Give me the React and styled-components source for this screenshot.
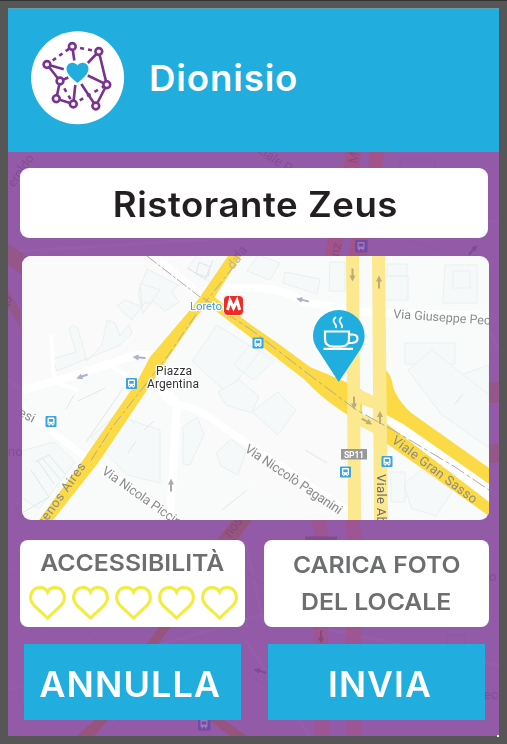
import React from 'react';
import styled, { createGlobalStyle } from 'styled-components';

const BLUE = '#21addd';
const PURPLE = '#935ba7';

const GlobalStyle = createGlobalStyle`
  * { box-sizing: border-box; }
  body { margin: 0; background: #565656; font-family: Inter, 'Open Sans', sans-serif; }
`;

const Frame = styled.div`
  width: 507px;
  height: 744px;
  padding: 8px;
  background: #565656;
  border-top: 1px solid #333;
  padding-top: 7px;
  overflow: hidden;
`;

const Screen = styled.main`
  position: relative;
  width: 491px;
  height: 728px;
  display: flex;
  flex-direction: column;
  background: ${PURPLE};
`;

const Backdrop = styled.svg`
  position: absolute;
  left: 0;
  top: 144px;
  width: 491px;
  height: 584px;
`;

const Header = styled.header`
  height: 144px;
  flex: none;
  display: flex;
  align-items: center;
  gap: 24px;
  padding: 0 0 5px 23px;
  background: ${BLUE};
  border-top: 1px solid #5b9fb9;
`;

const Logo = styled.svg`
  width: 94px;
  height: 94px;
  flex: none;
`;

const Label = styled.span`
  display: inline-block;
  white-space: nowrap;
  font-weight: ${(p) => p.$weight || 600};
  font-size: ${(p) => p.$size}px;
  line-height: ${(p) => p.$line || 40}px;
  letter-spacing: ${(p) => p.$track || 0}px;
  margin-right: ${(p) => -(p.$track || 0)}px;
  color: ${(p) => p.$color || '#fff'};
  transform: scaleX(${(p) => p.$stretch || 1});
  transform-origin: ${(p) => p.$origin || 'center'};
`;

const Content = styled.div`
  position: relative;
  flex: 1;
  padding: 16px 10px 0 12px;
`;

const TitleCard = styled.h1`
  margin: 0;
  width: 468px;
  height: 69.5px;
  padding: 3px 0 0 2px;
  display: flex;
  align-items: center;
  justify-content: center;
  border-radius: 9px;
  background: #fff;
`;

const MapCard = styled.svg`
  display: block;
  margin: 18.5px 0 0 2px;
  width: 467px;
  height: 264px;
  border-radius: 9px;
`;

const Row = styled.div`
  display: flex;
  gap: ${(p) => p.$gap}px;
  margin: ${(p) => p.$margin};
`;

const Card = styled.section`
  width: 225px;
  height: 87px;
  padding-top: ${(p) => p.$top}px;
  display: flex;
  flex-direction: column;
  align-items: center;
  border-radius: 8px;
  background: #fff;
`;

const Hearts = styled.div`
  display: flex;
  gap: 6px;
  margin-top: 7px;
  padding-left: 2px;
`;

const HeartIcon = styled.svg`
  width: 37px;
  height: 36px;
`;

const Action = styled.button`
  width: 217px;
  height: 76px;
  padding: 4px ${(p) => p.$right || 0}px 0 ${(p) => p.$left || 0}px;
  display: flex;
  align-items: center;
  justify-content: center;
  border: 0;
  border-radius: 0;
  font-family: inherit;
  background: ${BLUE};
`;

const MapText = styled.text`
  font-family: Roboto, sans-serif;
  font-size: ${(p) => p.$size || 13}px;
  font-weight: ${(p) => p.$weight || 400};
  fill: ${(p) => p.$fill || '#8b8b8b'};
  stroke: ${(p) => p.$halo || 'none'};
  stroke-width: 2.5px;
  stroke-linejoin: round;
  paint-order: stroke;
`;

const Corner = styled.i`
  position: absolute;
  right: 0;
  bottom: -1px;
  width: 2px;
  height: 2px;
  background: #fff;
`;

function NetworkLogo() {
  const nodes = [[47, 21.5], [73.5, 26.5], [21.7, 39.5], [34.7, 56], [81.5, 59.7], [31, 73.7], [48, 79], [70.5, 81]];
  return (
    <Logo viewBox="0 0 94 94" aria-label="Dionisio">
      <circle cx="46.6" cy="46.8" r="46.5" fill="#fff" />
      <g transform="translate(-5.7 -6)" stroke="#79328f" strokeWidth="2.6" fill="none">
        <path d="M47 21.5 49 35.5M73.5 26.5 62.5 38M73.5 26.5 81.5 59.7 70.5 81 56 59M81.5 59.7 62.5 50.5M21.7 39.5 38.5 44.2M21.7 39.5 34.7 56 43 52.5M34.7 56 31 73.7 48 79 50 60" />
        <path d="M21.7 39.5 47 21.5 73.5 26.5" strokeDasharray="4 4" strokeDashoffset="1" />
        <path d="M34.7 56 48 79 81.5 59.7" strokeDasharray="4 4.5" />
        {nodes.map(([x, y]) => <circle key={`${x}-${y}`} cx={x} cy={y} r="3.4" fill="#fff" />)}
      </g>
      <path d="M46.5 52C42 48 35.5 43.5 35.5 37.5 35.5 31.5 43.5 29.5 46.5 34.5 49.5 29.5 57.5 31.5 57.5 37.5 57.5 43.5 51 48 46.5 52Z" fill={BLUE} />
    </Logo>
  );
}

function Heart() {
  return (
    <HeartIcon viewBox="0 0 37 36">
      <path d="M18.5 33 5 20.3C1.7 17 1.6 14.5 1.6 12.6 1.6 6.6 5.8 2.4 11 2.4 14.7 2.4 17.2 4.2 18.5 7 19.8 4.2 22.3 2.4 26 2.4 31.2 2.4 35.4 6.6 35.4 12.6 35.4 14.5 35.3 17 32 20.3Z" fill="none" stroke="#f2ec3a" strokeWidth="3" />
    </HeartIcon>
  );
}

function BusStop({ x, y }) {
  return (
    <g transform={`translate(${x} ${y})`}>
      <rect x="-5.5" y="-5.5" width="11" height="11" rx="1" fill="#3ba5dc" />
      <path d="M-3.5-2.8Q-3.5-4-2.3-4H2.3Q3.5-4 3.5-2.8V3H2.5V4H1V3H-1V4H-2.5V3H-3.5Z" fill="#fff" />
      <path d="M-2.2-2.5H2.2V.2H-2.2ZM-2.4 1.4h1v1h-1zM1.4 1.4h1v1h-1z" fill="#3ba5dc" />
    </g>
  );
}

function Arrow({ x, y, angle = 0, size = 6.5, color = '#b9ac77' }) {
  return (
    <g transform={`translate(${x} ${y}) rotate(${angle})`} fill={color} stroke="none">
      <path d={`M-1-${size}H1V${size - 6}H3L0 ${size}-3 ${size - 6}H-1Z`} />
    </g>
  );
}

function StreetMap() {
  return (
    <MapCard viewBox="22 256 467 264" preserveAspectRatio="none">
      <rect x="22" y="255" width="467" height="266" fill="#f9fbfb" />
      <path d="M22 256H240L160 350 60 378 22 385ZM210 340 345 400V520H300L200 440Z" fill="#fafafa" />
      <g fill="#f5f9fa" stroke="#eaeff0" strokeWidth="1">
        <path d="M147 269 178 285 172 292 179 302 165 311 153 301 143 313 138 293Z" />
        <path d="M140 283 160 290 150 304 145 302 132 320 117 306 125 300 142 307Z" />
        <path d="M69 329Q72 322 78 329L87 361 102 345 107 320 115 323 120 336 129 325 132 333 120 345 57 371 53 359 76 352Z" />
        <path d="M188 268 203 247 228 257 211 283Z" />
        <path d="M217 325 260 352 227 393 192 361ZM250 345 275 360 253 380 234 365Z" />
        <path d="M247 271 258 255 280 263 270 280ZM285 272 320 279 317 294 283 283Z" />
        <path d="M330 262H345V291H329ZM387 264H407V276H387ZM385 276H408V300H385ZM445 265H477V303H443Z" />
        <path d="M453 271H470V288H453ZM405 343H455V364H405ZM455 377 489 365V420L447 390Z" />
        <path d="M408 370 432 350 489 395V448L441 414Z" />
        <path d="M22 451 54 442 75 462 39 509 22 498ZM91 437 115 415 160 430V483L127 475Z" />
        <path d="M183 427 197 417 204 434 190 465 183 464ZM216 453 231 439 246 451 238 475 221 466Z" />
        <path d="M218 392 239 380 259 396 252 413 226 405ZM252 412 278 392 296 410 278 435Z" />
        <path d="M391 472H405V502H391ZM404 484 421 470 453 490 436 516 411 508Z" />
      </g>
      <path d="M35 462 49 455 66 475M31 470 49 497 22 513M38 461 54 484M43 459 60 479M187 268l18 11 8-19M199 262l11 5-2 10-12-3zM66 409l8-14M128 453l8-12M144 430l10-9M78 401l27-13M86 442l38-55M222 510l25-20M305 450l22 13M455 404l8-10" fill="none" stroke="#e0e6e8" />
      <g fill="none" stroke="#fff">
        <path d="M22 390 73 376 115 362Q138 352 157 356M160 384Q162 397 177 405L170 520" strokeWidth="8" />
        <path d="M22 409 92 462 176 520M160 375 177 405Q195 405 226 429L347 510" strokeWidth="7" />
        <path d="M147 250 204 298M204 291 227 288 261 288Q285 290 304 302L361 312 489 316" strokeWidth="8" />
        <path d="M51 335 54 382 78 390M109 365 127 375" strokeWidth="4" />
      </g>
      <path d="M147 256 200 297" stroke="#aaa" strokeDasharray="12 2 3 2" />
      <g fill="#fcda45">
        <path d="M228 256H241L214 298 197 316 168 358 149 387 98 463 53 520H39L81 463 138 380 150 357 190 310 200 297Z" />
        <path d="M201 297 213 296 250 324 283 347 310 367Q332 376 348 383L362 390V423L348 415Q322 399 305 380L283 363 250 337 208 305Z" />
        <path d="M386 370Q392 376 393 387 397 399 410 412L489 468V484L403 424 385 414ZM386 423 489 502V516L386 443Z" />
      </g>
      <path d="M385 416 403 424 489 484V501L386 423Z" fill="#fff" />
      <g fill="#fce88e">
        <path d="M346 255H359L361 521H348ZM372 255H385L388 521H374Z" />
        <path d="M359 389 374 396V409L360 404ZM360 413 375 420V434L360 426Z" />
      </g>
      <g fill="none" stroke="#b0aaa0" strokeWidth="1">
        <path d="M235 265 215 290 197 313 167 357 113 426 90 462" strokeDasharray="12 3 3 3" />
        <path d="M203 298 250 329 307 373 355 409 398 433 455 467 489 490" strokeDasharray="15 3 4 3" />
      </g>
      <Arrow x={352.5} y={275} />
      <Arrow x={379} y={282} angle={180} />
      <Arrow x={354} y={403} />
      <Arrow x={380} y={417.5} angle={180} />
      <Arrow x={367} y={421.5} angle={-61} size={6} />
      <Arrow x={302.5} y={300} angle={104} color="#aeb0cc" />
      <Arrow x={139} y={357.5} angle={94} color="#aeb0cc" />
      <Arrow x={82} y={376.5} angle={70} size={6} color="#aeb0cc" />
      <Arrow x={171} y={485} angle={180} color="#aaa" />

      <MapText transform="translate(233 270) rotate(-52)" $fill="#c4b98a">da</MapText>
      <MapText x="190" y="309.5" $size={11.5} $fill="#3fa0c9" $halo="#fff" textLength="32">Loreto</MapText>
      <rect x="223.5" y="295.5" width="20" height="20" rx="4" fill="#ee2b25" stroke="#fff" />
      <path d="M227.5 310 230 300.5 233.5 308 237 300.5 239.7 310" fill="none" stroke="#fff" strokeWidth="3" />
      <MapText x="156" y="375" $size={12} $fill="#333" $halo="#fff" textLength="36">Piazza</MapText>
      <MapText x="147" y="388" $size={12} $fill="#333" $halo="#fff" textLength="52">Argentina</MapText>
      <MapText transform="translate(393 318) rotate(4)" $size={12.5} textLength="104">Via Giuseppe Pecc</MapText>
      <MapText transform="translate(11 412) rotate(27)" $size={13}>desi</MapText>
      <MapText transform="translate(101 473) rotate(35)" $halo="#fff" textLength="94">Via Nicola Piccin</MapText>
      <MapText transform="translate(244 451) rotate(34)" $halo="#fafafa" textLength="114">Via Niccolò Paganini</MapText>
      <MapText transform="translate(38 535) rotate(-55)" textLength="84">Buenos Aires</MapText>
      <MapText transform="translate(391 442) rotate(37)" $size={13} textLength="103">Viale Gran Sasso</MapText>
      <MapText transform="translate(377 474) rotate(90)" $fill="#6f6d67" $halo="#fce88e" textLength="79">Viale Abruzzi</MapText>
      <rect x="341" y="449" width="26" height="10.5" fill="#999" />
      <MapText x="344" y="457.5" $size={8.5} $weight={700} $fill="#fff" textLength="20">SP11</MapText>
      <BusStop x={258} y={343} />
      <BusStop x={131.5} y={383.5} />
      <BusStop x={51} y={421.5} />
      <BusStop x={345.5} y={472} />
      <BusStop x={387} y={461.5} />

      <path d="M338.7 382 318 350Q313 343 313 336A25.8 26 0 0 1 364.6 336Q364.6 343 360 350Z" fill={BLUE} />
      <g fill="none" stroke="#fff" strokeWidth="2.2">
        <path d="M325 331.5H349V339Q349 346.5 341 346.5H333Q325 346.5 325 339ZM349 334.5H352Q357.5 334.5 357.5 338.5T352 343H348M323.5 348.8H353" />
        <path d="M336 317Q332 320 334.5 323T335.5 328M342 317Q338 320 340.5 323T341.5 328" strokeWidth="1.9" />
      </g>
    </MapCard>
  );
}

function PurpleMap() {
  return (
    <Backdrop viewBox="8 152 491 584">
      <g fill="none" stroke="#965daa" strokeWidth="3">
        <path d="M8 252 499 221M8 380 22 390M8 690 260 615 499 665M245 640 310 736M245 540 264 625M489 330 499 350" />
      </g>
      <g stroke="#8754a0" fill="none" opacity=".45">
        <path d="M8 573 18 580M82 627 100 641M45 631l10-12 12 8M17 687l10 31M185 633l35-18M400 160h35v15h-35zM410 240l32 12M447 635h18v15h-18zM247 573l18 12M110 730l17-20M265 158l18 13M250 675l30 20M12 498l9 20" />
      </g>
      <g fill="#96547f">
        <path d="M220 536 238 513 252 520 158 644H147ZM95 720H108L94 736H77ZM208 719H222L247 736H230Z" />
        <path d="M8 244 28 257V280L8 264ZM8 290 20 310V327L8 308ZM489 382H499V403H489ZM489 444H499V463H489Z" opacity=".75" />
      </g>
      <g fill="#a45286">
        <path d="M345 152H361L359 169H344ZM370 152H385L381 169H368ZM328 237H343L340 257H325ZM352 237H369L366 257H349Z" opacity=".9" />
        <path d="M312 519H326L329 541H314ZM345 519H359L362 541H347ZM313 626H328V645H315ZM346 626H362V645H346ZM315 719H330V736H315ZM347 719H362V736H347Z" opacity=".6" />
      </g>
      <g opacity=".5">
        <MapText transform="translate(14 188) rotate(-56)" $fill="#744080">eroldo</MapText>
        <MapText transform="translate(257 152) rotate(34)" $fill="#744080">ziale P</MapText>
        <MapText transform="translate(238 261) rotate(-48)" $fill="#744080">da</MapText>
        <MapText transform="translate(339 257) rotate(-80)" $fill="#744080">nz</MapText>
        <MapText transform="translate(357 164) rotate(-80)" $fill="#744080">M</MapText>
        <MapText transform="translate(230 538) rotate(-52)" $fill="#744080">nos A</MapText>
        <MapText x="8" y="456" $fill="#744080">no</MapText>
        <MapText x="484" y="699" $fill="#744080">eco</MapText>
        <MapText x="489" y="581" $fill="#744080">o</MapText>
        <MapText transform="translate(10 307) rotate(-80)" $fill="#554095">lo</MapText>
      </g>
      <rect x="305" y="536.5" width="32" height="8" fill="#7d4c94" />
      <g>
        {[[361, 246], [204, 724]].map(([x, y]) => (
          <g key={x} transform={`translate(${x} ${y})`}>
            <rect x="-6" y="-6" width="12.5" height="12.5" rx="1.5" fill="#704ba5" />
            <path d="M-3.5-4H3.5V3H2.5V4.5H1V3H-1V4.5H-2.5V3H-3.5Z" fill="#a078b8" />
            <path d="M-2.2-2.5H2.2V.5H-2.2Z" fill="#704ba5" />
          </g>
        ))}
      </g>
      <Arrow x={473} y={250} angle={222} color="#7d4b92" />
      <Arrow x={321} y={637} color="#854978" />
      <Arrow x={260} y={671} angle={105} color="#7d4a95" />
    </Backdrop>
  );
}

export default function App() {
  return (
    <>
      <GlobalStyle />
      <Frame>
        <Screen>
          <PurpleMap />
          <Header>
            <NetworkLogo />
            <Label $size={36} $track={0.8} $stretch={1.02} $origin="left">Dionisio</Label>
          </Header>
          <Content>
            <TitleCard>
              <Label $size={35} $track={0.5} $stretch={1.045} $color="#231f20">Ristorante Zeus</Label>
            </TitleCard>
            <StreetMap />
            <Row $gap={19} $margin="19.5px 0 0">
              <Card $top={8}>
                <Label $size={23.5} $line={30} $color="#6d6e70" $stretch={1.055}>ACCESSIBILITÀ</Label>
                <Hearts>
                  {[1, 2, 3, 4, 5].map((n) => <Heart key={n} />)}
                </Hearts>
              </Card>
              <Card $top={6}>
                <Label $size={23.5} $line={37} $color="#6d6e70" $stretch={1.05}>CARICA FOTO</Label>
                <Label $size={23.5} $line={37} $color="#6d6e70" $stretch={1.055}>DEL LOCALE</Label>
              </Card>
            </Row>
            <Row $gap={27} $margin="17px 0 0 4px">
              <Action $right={5}><Label $size={35} $track={1} $stretch={1.03}>ANNULLA</Label></Action>
              <Action $left={6}><Label $size={35} $track={1} $stretch={1.02}>INVIA</Label></Action>
            </Row>
          </Content>
          <Corner />
        </Screen>
      </Frame>
    </>
  );
}
